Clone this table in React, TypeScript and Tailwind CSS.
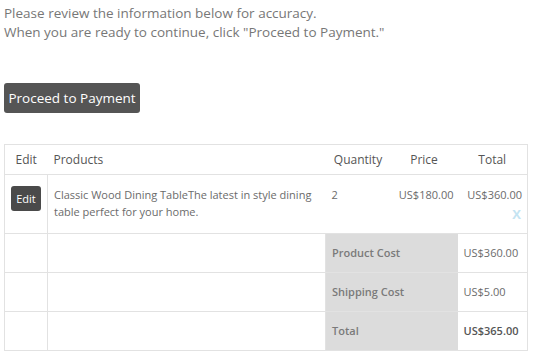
export default function App() {
  const font = { fontFamily: '"Open Sans", "Noto Sans", sans-serif' };
  return (
    <div className="bg-white w-[535px] h-[357px] overflow-hidden text-[#6b6b6b]" style={font}>
      <div className="pl-[4px] pt-[4px] text-[13.5px] leading-[19px] text-[#777]">
        <p>Please review the information below for accuracy.</p>
        <p>When you are ready to continue, click "Proceed to Payment."</p>
      </div>

      <button className="ml-[4px] mt-[41px] h-[30px] w-[136px] rounded-[3px] bg-[#555555] text-[13.5px] text-white">
        Proceed to Payment
      </button>

      <table className="ml-[4px] mt-[31px] w-[523px] table-fixed border-collapse border border-[#e2e2e2] text-[11px]">
        <colgroup>
          <col className="w-[43px]" />
          <col className="w-[278px]" />
          <col className="w-[65px]" />
          <col className="w-[67px]" />
          <col className="w-[70px]" />
        </colgroup>
        <thead>
          <tr className="h-[30px] text-[12px] text-[#555]">
            <th className="text-center font-normal">Edit</th>
            <th className="pl-[6px] text-left font-normal">Products</th>
            <th className="text-center font-normal">Quantity</th>
            <th className="text-center font-normal">Price</th>
            <th className="text-center font-normal">Total</th>
          </tr>
        </thead>
        <tbody>
          <tr className="h-[59px] border-t border-[#e2e2e2] align-top">
            <td className="border-r border-[#e2e2e2] pt-[11px] text-center">
              <span className="inline-block h-[25px] w-[30px] rounded-[3px] bg-[#4a4a4a] text-[11px] leading-[25px] text-white">Edit</span>
            </td>
            <td className="px-[6px] pt-[11px] leading-[17px]">
              Classic Wood Dining TableThe latest in style dining table perfect for your home.
            </td>
            <td className="pl-[6px] pt-[11px] leading-[17px]">2</td>
            <td className="pr-[4px] pt-[11px] text-right leading-[17px]">US$180.00</td>
            <td className="relative pr-[5px] pt-[11px] text-right leading-[17px]">
              US$360.00
              <span className="absolute right-[6px] top-[31px] text-[13px] font-bold text-[#c4e4f2]">X</span>
            </td>
          </tr>
          {[
            ['Product Cost', 'US$360.00', false],
            ['Shipping Cost', 'US$5.00', false],
            ['Total', 'US$365.00', true],
          ].map(([label, value, strong]) => (
            <tr key={label as string} className="h-[39px] border-t border-[#e2e2e2]">
              <td className="border-r border-[#e2e2e2]"></td>
              <td className="border-r border-[#e2e2e2]"></td>
              <td colSpan={2} className="bg-[#dcdcdc] pl-[6px] font-semibold text-[#7a7a7a]">
                {label}
              </td>
              <td className={`pl-[6px] ${strong ? 'font-semibold text-[#555]' : ''}`}>{value}</td>
            </tr>
          ))}
        </tbody>
      </table>
    </div>
  );
}
